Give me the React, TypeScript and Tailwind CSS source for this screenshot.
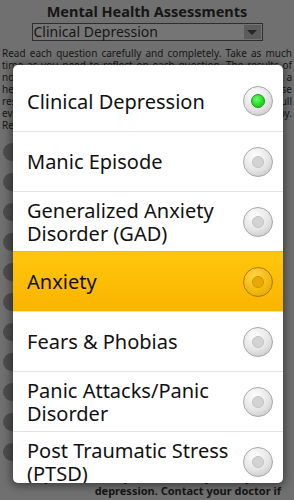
import React from "react";

type Option = {
  label: string;
  checked?: boolean;
  highlighted?: boolean;
};

const options: Option[] = [
  { label: "Clinical Depression", checked: true },
  { label: "Manic Episode" },
  { label: "Generalized Anxiety Disorder (GAD)" },
  { label: "Anxiety", highlighted: true },
  { label: "Fears & Phobias" },
  { label: "Panic Attacks/Panic Disorder" },
  { label: "Post Traumatic Stress (PTSD)" },
];

const questions = [
  "Do you feel sad or empty most of the day?",
  "Have you lost interest in activities?",
  "Has your appetite changed recently?",
  "Do you have trouble sleeping at night?",
  "Do you feel restless or slowed down?",
  "Do you feel tired or have no energy?",
  "Do you feel worthless or guilty?",
  "Is it hard to think or concentrate?",
  "Do you have thoughts of death?",
  "Do you feel hopeless about the future?",
  "Do these symptoms affect your days?",
];

const Radio = ({ checked, highlighted }: { checked?: boolean; highlighted?: boolean }) => {
  if (highlighted) {
    return (
      <div className="flex h-[30px] w-[30px] shrink-0 items-center justify-center rounded-full border border-[#a87c00] bg-[radial-gradient(circle_at_40%_30%,#ffd44a_0%,#f5b90f_55%,#e09e00_100%)]">
        <div className="h-[12px] w-[12px] rounded-full border border-[#d19400] bg-[#e8a900]" />
      </div>
    );
  }
  return (
    <div className="flex h-[30px] w-[30px] shrink-0 items-center justify-center rounded-full border border-[#a8a8a8] bg-[radial-gradient(circle_at_40%_30%,#ffffff_0%,#e4e4e4_55%,#bcbcbc_100%)]">
      {checked ? (
        <div className="h-[14px] w-[14px] rounded-full border border-[#189a18] bg-[radial-gradient(circle_at_40%_35%,#6bff6b_0%,#22d822_60%,#14b914_100%)]" />
      ) : (
        <div className="h-[12px] w-[12px] rounded-full border border-[#c2c2c2] bg-[#d3d3d3]" />
      )}
    </div>
  );
};

export default function App() {
  return (
    <div className="relative h-[500px] w-[294px] overflow-hidden bg-[#707070] font-['Noto_Sans','Open_Sans',sans-serif]">
      {/* page underneath, drawn already dimmed by the dialog */}
      <div className="flex h-[500px] flex-col items-center text-[#161616]">
        <h1 className="mt-[1px] text-[14.5px] font-bold leading-[20px]">
          Mental Health Assessments
        </h1>
        <div className="mt-[2px] flex h-[18px] w-[231px] items-center border border-[#2e2e2e] bg-[#757575]">
          <span className="flex-1 pl-[1px] text-[14px] leading-[16px]">Clinical Depression</span>
          <div className="mr-[1px] flex h-[14px] w-[17px] items-center justify-center bg-[#5c5c5c]">
            <div className="h-0 w-0 border-x-[5px] border-t-[5px] border-x-transparent border-t-[#262626]" />
          </div>
        </div>
        <p className="mt-[6px] px-[2px] text-justify text-[10px] leading-[12px]">
          Read each question carefully and completely. Take as much time as you need to reflect on
          each question. The results of none of these tests should be taken as a diagnosis. Contact
          a health professional if you have concerns about any of these results for a medical
          interpretation of your answers and a full evaluation by a trained and licensed doctor
          nearby. Remember your answers are private.
        </p>
        <div className="mt-[6px] flex w-full flex-col">
          {questions.map((q) => (
            <div key={q} className="flex h-[30px] items-center gap-[6px]">
              <div className="ml-[3px] h-[18px] w-[18px] shrink-0 rounded-full bg-[#4e4e4e]" />
              <span className="text-[11px]">{q}</span>
            </div>
          ))}
        </div>
        <div className="mt-[3px] flex w-full flex-col items-end pr-[13px] text-[11px] font-bold leading-[14px]">
          <span>If you answered yes to several, you may have</span>
          <span>depression. Contact your doctor if</span>
          <span>you are concerned.</span>
        </div>
      </div>

      {/* dialog */}
      <div className="absolute left-[13px] top-[65px] h-[418px] w-[270px] overflow-hidden rounded-[5px] bg-white shadow-[0_1px_8px_2px_#00000070]">
        {options.map((o, i) => (
          <div
            key={o.label}
            className={
              (i === 0 ? "h-[66px] pt-[6px] " : "h-[60px] border-t border-[#e2e2e2] ") +
              (o.highlighted
                ? "border-transparent bg-[linear-gradient(to_bottom,#ffc60c,#fab400)] "
                : "") +
              "flex items-center gap-[8px] pl-[14px] pr-[10px]"
            }
          >
            <span className="flex-1 text-[20px] leading-[23px] text-[#111]">{o.label}</span>
            <Radio checked={o.checked} highlighted={o.highlighted} />
          </div>
        ))}
      </div>
    </div>
  );
}
